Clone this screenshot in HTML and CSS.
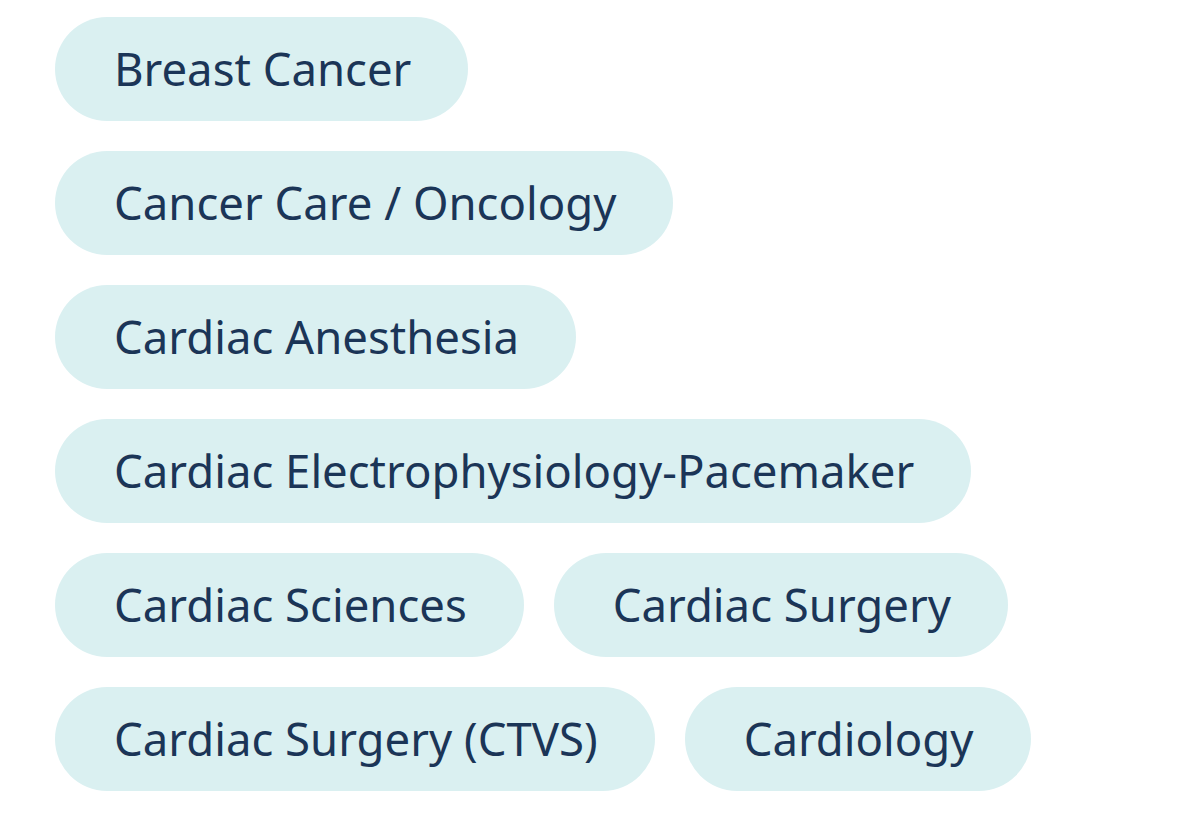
FILE: index.html
```html
<!DOCTYPE html>
<html lang="en">
<head>
<meta charset="utf-8">
<title>Specialities</title>
<link rel="stylesheet" href="styles.css">
</head>
<body>
<ul class="tags">
  <li class="tag">Breast Cancer</li>
  <li class="tag">Cancer Care / Oncology</li>
  <li class="tag">Cardiac Anesthesia</li>
  <li class="tag">Cardiac Electrophysiology-Pacemaker</li>
  <li class="tag">Cardiac Sciences</li>
  <li class="tag">Cardiac Surgery</li>
  <li class="tag">Cardiac Surgery (CTVS)</li>
  <li class="tag">Cardiology</li>
</ul>
</body>
</html>
```
FILE: styles.css
```css
html, body {
  margin: 0;
  padding: 0;
  background: #ffffff;
}
body {
  font-family: "Noto Sans", "Open Sans", sans-serif;
}
.tags {
  list-style: none;
  margin: 0;
  padding: 17px 0 0 55px;
  width: 1010px;
  display: flex;
  flex-wrap: wrap;
  gap: 30px 30px;
}
.tag {
  display: inline-flex;
  align-items: center;
  height: 104px;
  padding: 0 57px 0 59px;
  box-sizing: border-box;
  border-radius: 52px;
  background: #daf0f1;
  color: #1b3557;
  font-size: 45.5px;
  line-height: 1;
  white-space: nowrap;
}
```
